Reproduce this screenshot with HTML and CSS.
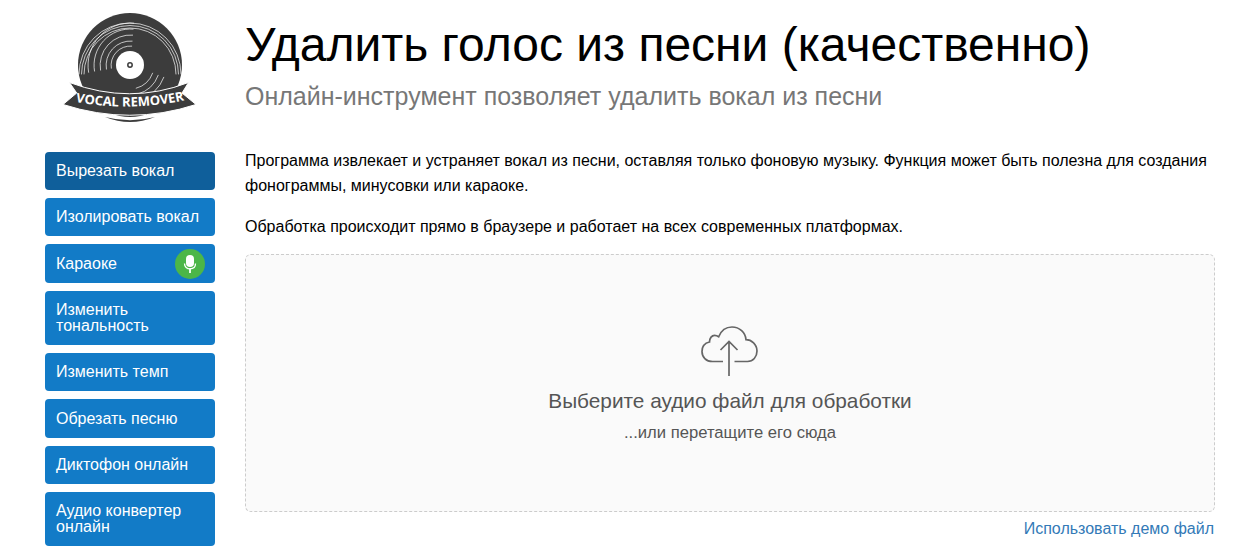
FILE: index.html
```html
<!DOCTYPE html>
<html lang="ru">
<head>
<meta charset="utf-8">
<title>Удалить голос из песни</title>
<link rel="stylesheet" href="styles.css">
</head>
<body>
<div class="page">
  <aside class="sidebar">
    <a class="logo" href="#">
      <svg width="140" height="126" viewBox="0 0 140 126">
        <circle cx="70" cy="65" r="52" fill="#3c3c3c"/>
        <g fill="none" stroke="#fff" stroke-width=".7" stroke-linecap="round">
          <path d="M19 75A50 50 0 0 1 121 75" transform="translate(0 -1)"/>
          <path d="M21.500 75A48 48 0 0 1 118.500 75" transform="translate(0 -1)"/>
          <path d="M24 75A46 46 0 0 1 116 75" transform="translate(0 -1)"/>
          <path d="M28.600 72.300A42 42 0 0 1 73.700 23.200"/>
          <path d="M34.500 71.100A36 36 0 0 1 73.100 29.100"/>
          <path d="M40.500 70.100A30 30 0 0 1 72.600 35.100"/>
          <path d="M46.400 69.100A24 24 0 0 1 72.100 41.100"/>
          <path d="M51.300 68.200A19 19 0 0 1 71.700 46.100"/>
          <path d="M103.800 77.300A36 36 0 0 1 79.300 99.800"/>
          <path d="M98.200 75.300A30 30 0 0 1 77.800 94"/>
          <path d="M92.600 73.200A24 24 0 0 1 76.200 88.200"/>
        </g>
        <circle cx="70" cy="65" r="14" fill="#fff"/>
        <circle cx="70" cy="65" r="2.200" fill="#fff" stroke="#3c3c3c" stroke-width="1.500"/>
        <path d="M9.500 82.500Q70 105 128.500 82.500L122 93L136 104.500Q70 126 3 104.500L16.700 93Z" fill="#3c3c3c" stroke="#fff" stroke-width="1"/>
        <path id="ribbon" d="M10 101Q70 113 130 99" fill="none"/>
        <text class="logo-text"><textPath href="#ribbon" startOffset="50%" text-anchor="middle">VOCAL REMOVER</textPath></text>
        <path d="M45 117Q70 127 95 117Q70 123.500 45 117Z" fill="#3c3c3c"/>
      </svg>
    </a>
    <nav class="menu">
      <a class="item active" href="#">Вырезать вокал</a>
      <a class="item" href="#">Изолировать вокал</a>
      <a class="item item-badge" href="#">Караоке
        <span class="mic">
          <svg width="14" height="18" viewBox="0 0 14 18">
            <rect x="3" y="0" width="8" height="12" rx="4" fill="#fff"/>
            <path d="M1.500 8.500C1.500 12 4 13.800 7 13.800S12.500 12 12.500 8.500" fill="none" stroke="#fff" stroke-width="1.300"/>
            <path d="M7 13.500V18" stroke="#fff" stroke-width="1.800"/>
          </svg>
        </span>
      </a>
      <a class="item" href="#">Изменить тональность</a>
      <a class="item" href="#">Изменить темп</a>
      <a class="item item-low" href="#">Обрезать песню</a>
      <a class="item" href="#">Диктофон онлайн</a>
      <a class="item" href="#">Аудио конвертер онлайн</a>
    </nav>
  </aside>
  <main class="main">
    <header class="head">
      <h1 class="title">Удалить голос из песни (качественно)</h1>
      <h2 class="subtitle">Онлайн-инструмент позволяет удалить вокал из песни</h2>
    </header>
    <p class="text">Программа извлекает и устраняет вокал из песни, оставляя только фоновую музыку. Функция может быть полезна для создания фонограммы, минусовки или караоке.</p>
    <p class="text text-second">Обработка происходит прямо в браузере и работает на всех современных платформах.</p>
    <section class="drop">
      <svg class="cloud" width="58" height="50" viewBox="0 0 58 50">
        <path d="M22 35.500H11.500C5 35.500 1 31 1 25.500C1 20.500 4 17 8.500 16C8.500 12 11 9.300 13.500 9.300C15 9.300 16.500 9.800 17.700 10.700C20 5 25 1 31 1C38.500 1 44.500 6.500 45 13.700C50.500 13.700 56 18.500 56 25C56 31 52 35.500 46.500 35.500H33.500" fill="none" stroke="#666" stroke-width="1.700"/>
        <path d="M28 50V15.500M19.500 24L28 15.500L36.500 24" fill="none" stroke="#666" stroke-width="1.700"/>
      </svg>
      <div class="drop-title">Выберите аудио файл для обработки</div>
      <div class="drop-sub">...или перетащите его сюда</div>
    </section>
    <div class="demo"><a href="#">Использовать демо файл</a></div>
  </main>
</div>
</body>
</html>
```
FILE: styles.css
```css
* { box-sizing: border-box; }
html, body { margin: 0; height: 546px; overflow: hidden; background: #fff; }
body { font-family: "Liberation Sans", Arial, sans-serif; color: #000; }
a { text-decoration: none; }
.page { display: flex; gap: 30px; padding-left: 45px; }
.sidebar { width: 170px; flex: none; }
.logo { display: block; height: 152px; padding-left: 15px; }
.logo svg { display: block; }
.logo-text { font: bold 13px "Open Sans", "Liberation Sans", sans-serif; fill: #fff; }
.menu { display: flex; flex-direction: column; gap: 8px; }
.item { display: flex; align-items: center; justify-content: space-between; min-height: 38px; padding: 11px 11px; background: #127bc7; color: #fff; font-size: 16px; line-height: 16px; border-radius: 4px; }
.item.active { background: #0f5f9b; }
.item-badge { padding: 0 10px 0 11px; height: 39px; }
.item-low { padding-top: 12px; }
.mic { width: 30px; height: 30px; border-radius: 50%; background: #4cb648; display: flex; align-items: center; justify-content: center; }
.main { width: 970px; flex: none; }
.head { height: 148px; padding-top: 15px; }
.title { margin: 0; font-size: 48px; font-weight: 400; line-height: 60px; color: #000; }
.subtitle { margin: 6px 0 0; font-size: 25px; font-weight: 400; line-height: 30px; color: #777; }
.text { margin: 0; font-size: 16px; line-height: 25px; width: 970px; color: #000; }
.text-second { margin-top: 16px; }
.drop { margin-top: 15px; height: 258px; border: 1px dashed #ccc; border-radius: 6px; background: #fafafa; display: flex; flex-direction: column; align-items: center; padding-top: 71px; }
.cloud { display: block; }
.drop-title { margin-top: 13px; font-size: 20.800px; line-height: 24px; color: #555; }
.drop-sub { margin-top: 10px; font-size: 16.640px; line-height: 20px; color: #555; }
.demo { margin-top: 6px; padding-right: 1px; text-align: right; font-size: 16px; line-height: 22px; }
.demo a { color: #337ab7; }
```
